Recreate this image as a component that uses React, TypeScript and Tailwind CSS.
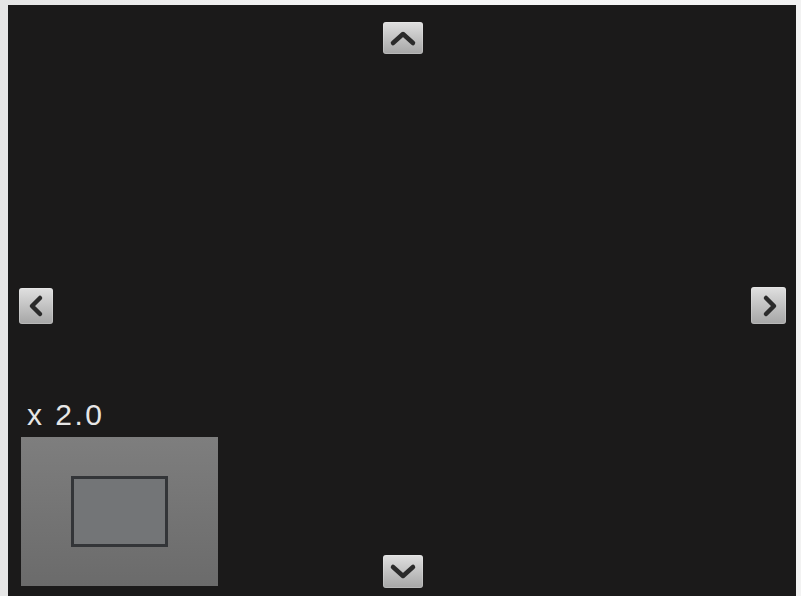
import React from "react";

type Dir = "up" | "down" | "left" | "right";

const CHEVRONS: Record<Dir, string> = {
  up: "M5 15 L15 6 L25 15",
  down: "M5 6 L15 15 L25 6",
  left: "M17 5 L9 13 L17 21",
  right: "M10 5 L18 13 L10 21",
};

const NavButton = ({ dir, className }: { dir: Dir; className: string }) => {
  const wide = dir === "up" || dir === "down";
  return (
    <button
      className={`flex items-center justify-center rounded-[3px] bg-gradient-to-b from-[#e0e0e0] to-[#a6a6a6] shadow-[inset_0_0_0_1px_rgba(255,255,255,0.2)] ${className}`}
    >
      <svg
        width={wide ? 30 : 26}
        height={wide ? 21 : 26}
        viewBox={wide ? "0 0 30 21" : "0 0 26 26"}
        fill="none"
        stroke="#2b2b2b"
        strokeWidth={4.5}
        strokeLinecap="round"
        strokeLinejoin="round"
      >
        <path d={CHEVRONS[dir]} />
      </svg>
    </button>
  );
};

export default function App() {
  return (
    <div className="w-[801px] h-[596px] bg-gradient-to-r from-[#e6e6e6] via-[#f7f7f7] to-[#f2f2f2] pl-2 pt-[5px] pr-[5px] overflow-hidden">
      <div className="w-[788px] h-[600px] bg-[#1b1a1a] flex flex-col">
        {/* pan up */}
        <div className="flex justify-center pt-[17px] pl-[2px]">
          <NavButton dir="up" className="w-10 h-8" />
        </div>

        {/* pan left / right */}
        <div className="mt-[233px] flex items-start justify-between pl-[11px] pr-[10px]">
          <NavButton dir="left" className="mt-px w-[34px] h-9" />
          <NavButton dir="right" className="w-[35px] h-[37px]" />
        </div>

        {/* zoom level + overview, pan down */}
        <div className="mt-[74px] grid grid-cols-[1fr_auto_1fr] items-end">
          <div className="flex flex-col pl-[13px]">
            <span className="pl-[6px] text-[30px] leading-[34px] text-[#e6e6e6] font-['Liberation_Sans',sans-serif] font-normal tracking-[2.5px]">
              x 2.0
            </span>
            <div className="mt-[5px] w-[197px] h-[149px] bg-gradient-to-b from-[#7e7e7e] to-[#6b6b6b] flex items-center justify-center">
              <div className="w-[97px] h-[71px] mr-px border-[3px] border-[#333538] bg-[#737577]" />
            </div>
          </div>
          <NavButton dir="down" className="ml-[2px] -mb-[2px] w-10 h-[33px]" />
          <div />
        </div>
      </div>
    </div>
  );
}
